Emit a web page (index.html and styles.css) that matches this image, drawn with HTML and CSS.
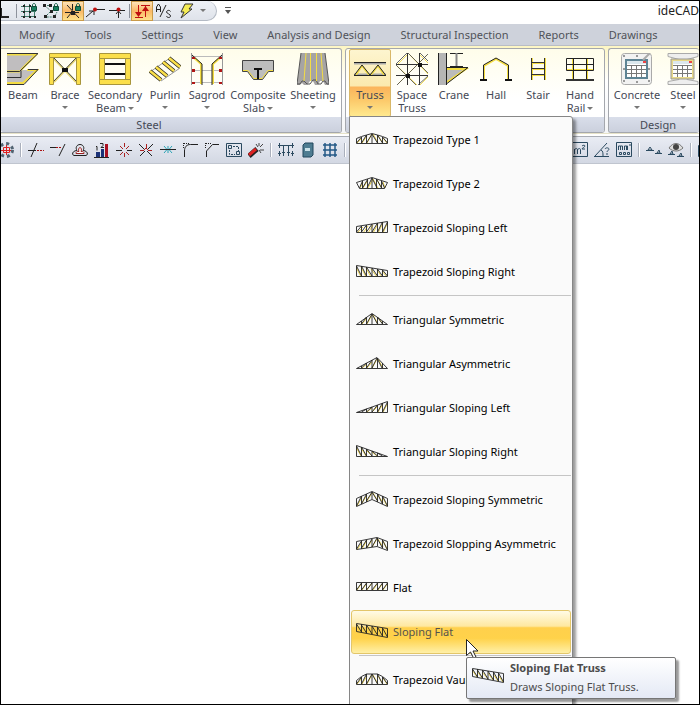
FILE: index.html
```html
<!DOCTYPE html>
<html lang="en">
<head>
<meta charset="utf-8">
<title>ideCAD</title>
<link rel="stylesheet" href="styles.css">
</head>
<body>
<div class="window">
  <header class="titlebar">
    <div class="quick">
      <button class="q q-first" aria-label="Ortho"><svg viewBox="0 0 20 20"><path class="k2" d="M9 7v9h8"/></svg></button>
      <span class="qsep"></span>
      <button class="q" aria-label="Grid snap"><svg viewBox="0 0 20 20"><path class="g" d="M5.500 3v14M10.500 3v14M15.500 11v6M2 5.500h9M2 10.500h15M2 15.500h15"/><path class="kf" d="M4 4h2v2H4zM10 4h2v2h-2zM4 10h2v2H4zM10 10h2v2h-2zM4 15h2v2H4zM10 15h2v2h-2zM15 15h2v2h-2z"/><use href="#lock"/></svg></button>
      <button class="q" aria-label="Object snap"><svg viewBox="0 0 20 20"><path class="g" d="M3 4.500h7M4 5l6 5-6 6h9M14 15l2-4" stroke-dasharray="2 1"/><path class="kf" d="M2 3h3v3H2zM8 3h3v3H8zM9 9h3v3H9zM3 14h3v3H3zM12 14h3v3h-3z"/><use href="#lock"/></svg></button>
      <button class="q on" aria-label="Node lock"><svg viewBox="0 0 20 20"><path class="k" d="M2 11.500h14M4 4l12 13M4 17l5-6M9.500 3v6"/><path class="kf" d="M8 10h4v4H8z"/><use href="#lock"/></svg></button>
      <button class="q" aria-label="Snap to line"><svg viewBox="0 0 20 20"><path class="k" d="M9 8.500h11M1 16l7-6M4 10h5v4"/><circle class="rf" cx="10" cy="8.500" r="2"/></svg></button>
      <button class="q" aria-label="Snap perpendicular"><svg viewBox="0 0 20 20"><path class="k" d="M2 9.500h16M11.500 10v7M9 13l2.500-3 2.500 3"/><circle class="rf" cx="11.500" cy="8.500" r="2"/></svg></button>
      <span class="qsep"></span>
      <button class="q on" aria-label="Elevation"><svg viewBox="0 0 20 20"><path class="r2" d="M6.500 4v11M3 16.500h8M13.500 5v11M9 4.500h9"/><path class="rf" d="M3 11h7l-3.500 5zM10 10h7l-3.500-5z"/></svg></button>
      <button class="q" aria-label="A/S"><svg viewBox="0 0 20 20"><path class="k" d="M2.500 11V6l2-3 2 3v5M3 8.500h4M6 16l6-12M16.500 10.500c-1-2-4-1-4 .5s4 2 4 4-3.500 2-4 0"/></svg></button>
      <button class="q" aria-label="Run"><svg viewBox="0 0 20 20"><path d="M9 3h8l-4 5h3L5 17l3-6H5z" fill="#f4ec55" stroke="#333"/></svg></button>
      <button class="q-arrow" aria-label="More"><svg viewBox="0 0 8 5"><path d="M1 1h6L4 4z"/></svg></button>
    </div>
    <button class="customize" aria-label="Customize"><svg viewBox="0 0 8 8"><path d="M1 0h6v1H1zM1 3h6L4 7z"/></svg></button>
    <span class="app">ideCAD</span>
  </header>

  <nav class="tabs">
    <button>Modify</button><button>Tools</button><button>Settings</button><button>View</button><button>Analysis and Design</button><button>Structural Inspection</button><button>Reports</button><button>Drawings</button>
  </nav>

  <div class="ribbon">
    <section class="group group-first">
      <div class="tools">
        <button class="tool"><svg class="ic" viewBox="0 0 32 32"><path d="M0 0h31L14 18v13H0z" fill="#c0bebf"/><path d="M14 17h17L17 31h-3z" fill="#c0bebf"/><path d="M0 1.500h29L14 17M0 18.500h13M20 17h10L16 30H0" fill="none" stroke="#f4dd43" stroke-width="2"/><path d="M0 .5h31L12.500 18.500H0M21 16.500h10L17 31.500H0M0 24.500h14v-7" fill="none" stroke="#333"/></svg><span>Beam</span></button>
        <button class="tool"><svg class="ic" viewBox="0 0 32 32"><path d="M5 6l22 23M27 6L5 29" stroke="#e6d777" stroke-width="2"/><path d="M5 5l22 23M27 5L5 28" stroke="#444"/><path class="y" d="M.5.500h31v4H.5zM.5 4.500h4v27h-4zM27.500 4.500h4v27h-4z"/><path d="M13 15h6v4h-6z" fill="#111"/></svg><span>Brace</span><i class="arr"></i></button>
        <button class="tool w58"><svg class="ic" viewBox="0 0 32 32"><path class="y" d="M.5 5.500h5v21h-5zM26.500 5.500h5v21h-5zM.5.500h31v5H.5zM.5 26.500h31v5H.5z"/><path d="M6 11h20M6 21h20" stroke="#111" stroke-width="2"/></svg><span>Secondary<br>Beam<i class="arr"></i></span></button>
        <button class="tool"><svg class="ic" viewBox="0 0 32 32"><path d="M1 19L21 5M12 28l19-13" stroke="#999"/><path d="M1 18l11 9M7 14l11 9M14 9l11 9M20 5l11 9" stroke="#222" stroke-width="4"/><path d="M1 18l11 9M7 14l11 9M14 9l11 9M20 5l11 9" stroke="#fbe04a" stroke-width="2.500"/></svg><span>Purlin</span><i class="arr"></i></button>
        <button class="tool"><svg class="ic" viewBox="0 0 32 32"><path d="M0 3.500h32M0 17.500h32M0 29.500h32" stroke="#bbb"/><path d="M.5 0v32M31.500 0v32" stroke="#999"/><path d="M2 4l8 7v20M30 4l-8 7v20" fill="none" stroke="#f4dd43" stroke-width="2"/><path d="M1 2l10 9v21M31 2l-10 9v21" fill="none" stroke="#222"/><path d="M1 4h3v2H1zM1 16h3v3H1zM1 29h3v2H1zM28 4h3v2h-3zM28 16h3v3h-3zM28 29h3v2h-3z" fill="#b01616"/></svg><span>Sagrod</span><i class="arr"></i></button>
        <button class="tool w60"><svg class="ic" viewBox="0 0 32 32"><path d="M.5 7.500h31v11h-5l-6 8h-9l-6-8h-5z" fill="#bdbdbd" stroke="#444"/><path d="M1 17.500h5l6 8h8l6-8h5" fill="none" stroke="#f4dd43"/><path d="M12 16h8M16 16v10" stroke="#111" stroke-width="2"/></svg><span>Composite<br>Slab<i class="arr"></i></span></button>
        <button class="tool w50"><svg class="ic" viewBox="0 0 32 32"><path d="M4 0h24l4 32h-4l-2-4h-3l-2 4h-3l-2-4h-3l-3 4H7l-2-2-2 2H0z" fill="#a6a4a4"/><path d="M4 0L0 31h3l2-3h2l3 3h3l3-4h3l2 4h3l2-3h2l2 3h2L28 0" fill="none" stroke="#555"/><path d="M9 0L7 28M13.500 0v28M19.500 0v28M24 0l2 28" stroke="#f4dd43"/></svg><span>Sheeting</span><i class="arr"></i></button>
      </div>
      <h2>Steel</h2>
    </section>

    <section class="group group-truss">
      <div class="tools">
        <div class="split">
          <button class="tool active" aria-expanded="true"><svg class="ic" viewBox="0 0 32 32"><path d="M0 10.500h32M0 21.500h32" stroke="#a8a8a8" stroke-width="2"/><path d="M2 22l6-9 7 9M17 22l7-9 6 9" fill="none" stroke="#f4dd43" stroke-width="1.500"/><path d="M0 9.500h32M0 22.500h32M.5 22L8 12l8 10 8-10 7.500 10" fill="none" stroke="#222"/></svg><span>Truss</span><i class="arr"></i></button>
          <div class="menu" role="menu">
            <button role="menuitem"><svg class="ic" viewBox="0 0 32 32"><path class="ty" d="M1 19l5-5M6 19l5-7M11 19l5-9M17 10l5 9M22 12l5 7M27 14l4 5"/><path class="tk" d="M.5 19.500v-5l5-2 5-1.500L16 9.500l5.500 1.500 5 1.500 5 2v5zM5.500 13v6M10.500 11v8M16 10v9M21.500 11v8M26.500 13v6M.5 19l5-6M5.500 19l5-8M10.500 19L16 10l5.500 9M21.500 11l5 8M26.500 13l5 6"/></svg>Trapezoid Type 1</button>
            <button role="menuitem"><svg class="ic" viewBox="0 0 32 32"><path class="ty" d="M4 20l3-6M7 20l5-8M12 20l5-9M17 11l5 9M21 12l5 8M27 14l2 6"/><path class="tk" d="M3.500 20.500l-3-6L16 9.500l15.500 5-3 6zM3.500 20l3-7M6.500 20l5-8.500M11 20l5-10 5 10M6.500 13v7M11.500 11v9M16 10v10M20.500 11v9M25.500 13v7M20.500 11l5 9M25.500 13l3 7"/></svg>Trapezoid Type 2</button>
            <button role="menuitem"><svg class="ic" viewBox="0 0 32 32"><path class="ty" d="M1 21l6-6M7 21l5-7M12 21l5-8M17 21l5-9M22 21l5-10M27 21l5-11"/><path class="tk" d="M.5 20.500v-6l31-5v11zM5.500 14v6M10.500 13v7M16 12v8M21.500 11v9M26.500 10v10M.5 20l5-6M5.500 20l5-7M10.500 20L16 12M16 20l5.500-9M21.500 20l5-10M26.500 20l5-10"/></svg>Trapezoid Sloping Left</button>
            <button role="menuitem"><svg class="ic" viewBox="0 0 32 32"><path class="ty" d="M0 11l5 10M5 11l5 10M10 12l5 9M15 13l6 8M21 14l5 7M26 15l5 6"/><path class="tk" d="M31.500 20.500v-6l-31-5v11zM26.500 14v6M21.500 13v7M16 12v8M10.500 11v9M5.500 10v10M31.500 20l-5-6M26.500 20l-5-7M21.500 20L16 12M16 20l-5.500-9M10.500 20l-5-10M5.500 20l-5-10"/></svg>Trapezoid Sloping Right</button>
            <hr>
            <button role="menuitem"><svg class="ic" viewBox="0 0 32 32"><path class="ty" d="M6 20l5-6M11 20l5-9M17 11l5 9M22 14l5 6"/><path class="tk" d="M.5 20.500L16 9.500l15.500 11zM5.500 17v3M10.500 13v7M16 10v10M21.500 13v7M26.500 17v3M5.500 20l5-7M10.500 20L16 10l5.500 10M21.500 13l5 7"/></svg>Triangular Symmetric</button>
            <button role="menuitem"><svg class="ic" viewBox="0 0 32 32"><path class="ty" d="M6 20l5-4M11 20l5-6M16 20l5-9M22 11l5 9"/><path class="tk" d="M.5 20.500l20.500-11 10.500 11zM5.500 18v2M10.500 15v5M16 12v8M21.500 10v10M26.500 15v5M5.500 20l5-5M10.500 20l5.500-8M16 20l5-10 5 10"/></svg>Triangular Asymmetric</button>
            <button role="menuitem"><svg class="ic" viewBox="0 0 32 32"><path class="ty" d="M11 20l5-4M16 20l6-6M22 20l5-8M27 20l5-9"/><path class="tk" d="M.5 20.500l31-11v11zM10.500 17v3M16 15v5M21.500 13v7M26.500 11v9M5.500 20l5-3M10.500 20l5.500-5M16 20l5.500-7M21.500 20l5-9M26.500 20l5-10"/></svg>Triangular Sloping Left</button>
            <button role="menuitem"><svg class="ic" viewBox="0 0 32 32"><path class="ty" d="M0 11l5 9M5 12l5 8M10 14l6 6M16 16l5 4"/><path class="tk" d="M31.500 20.500l-31-11v11zM21.500 17v3M16 15v5M10.500 13v7M5.500 11v9M26.500 20l-5-3M21.500 20L16 15M16 20l-5.500-7M10.500 20l-5-9M5.500 20l-5-10"/></svg>Triangular Sloping Right</button>
            <hr>
            <button role="menuitem"><svg class="ic" viewBox="0 0 32 32"><path class="ty" d="M1 22l5-9M6 19l5-8M11 17l5-8M17 9l5 8M22 11l5 8M27 14l4 8"/><path class="tk" d="M.5 22.500v-8L16 7.500l15.500 7v8L16 15.500zM5.500 12v8M10.500 10v8M16 8v7M21.500 10v8M26.500 12v8M.5 22l5-10M5.500 20l5-10M10.500 17L16 8l5.500 9M21.500 10l5 10M26.500 12l5 10"/></svg>Trapezoid Sloping Symmetric</button>
            <button role="menuitem"><svg class="ic" viewBox="0 0 32 32"><path class="ty" d="M1 22l5-8M6 21l5-9M11 20l5-8M16 19l5-8M22 11l5 8M27 13l4 8"/><path class="tk" d="M.5 21.500v-8l20.500-4 10.500 4v9L21 18.500zM5.500 13v8M10.500 12v8M16 11v8M21.500 10v8M26.500 12v8M.5 21l5-8M5.500 20l5-8M10.500 20l5.500-9M16 19l5-9 5.500 10M26.500 12l5 10"/></svg>Trapezoid Slopping Asymmetric</button>
            <button role="menuitem"><svg class="ic" viewBox="0 0 32 32"><path class="ty" d="M1 18l5-7M6 18l5-7M11 18l5-7M17 18l5-7M22 18l5-7M27 18l5-7"/><path class="tk" d="M.5 10.500h31v8H.5zM5.500 11v7M10.500 11v7M16 11v7M21.500 11v7M26.500 11v7M.5 18l5-7M5.500 18l5-7M10.500 18l5.500-7M16 18l5.500-7M21.500 18l5-7M26.500 18l5-7"/></svg>Flat</button>
            <button role="menuitem" class="hover"><svg class="ic" viewBox="0 0 32 32"><use href="#sloping-flat"/></svg>Sloping Flat</button>
            <hr>
            <button role="menuitem"><svg class="ic" viewBox="0 0 32 32"><path class="ty" d="M1 20l5-6M6 20l5-8M11 20l5-9M17 11l5 9M22 12l5 8M27 14l4 6"/><path class="tk" d="M.5 20.500v-4l5-4 5-2.500h11l5 2.500 5 4v4zM5.500 13v7M10.500 10v10M16 10v10M21.500 10v10M26.500 13v7M.5 20l5-7M5.500 20l5-10M10.500 20L16 10l5.500 10M21.500 10l5 10M26.500 13l5 7"/></svg>Trapezoid Vault</button>
            <div class="tip" role="tooltip">
              <svg class="ic" viewBox="0 0 32 32"><use href="#sloping-flat"/></svg>
              <div><strong>Sloping Flat Truss</strong><p>Draws Sloping Flat Truss.</p></div>
            </div>
            <svg class="cursor" viewBox="0 0 13 20"><path d="M.5.500v16l4-3.500 3 6 2.500-1-3-6h5z" fill="#fff" stroke="#222"/></svg>
          </div>
        </div>
        <button class="tool"><svg class="ic" viewBox="0 0 32 32"><path d="M1 12L12 1M1 13l20 19M13 1l19 20M2 31L31 2M24 32l8-8M24 2l8 8" stroke="#f0dc5c"/><path d="M0 11.500h32M0 22.500h32M11.500 0v32M23.500 0v32" stroke="#333"/><path d="M0 11L11 0M0 12l20 20M12 0l20 20M1 32L32 1M22 32l10-9M24 0l8 8" stroke="#444" stroke-width=".8"/><path d="M10 21h4v4h-4zM22 10h4v4h-4z" fill="#111"/></svg><span>Space<br>Truss</span></button>
        <button class="tool"><svg class="ic" viewBox="0 0 32 32"><path d="M9 15h19L9 29z" fill="#bbb"/><path d="M9 16h19L9 29" fill="none" stroke="#f4dd43" stroke-width="2"/><path d="M0 0h8v32H0z" fill="#b5b5b5"/><path d="M.5 0v32M8.500 0v32M9 14.500h21L9 30.500M12 .5h13M12 13.500h13" fill="none" stroke="#222"/><path d="M18.500 0v13" stroke="#888" stroke-width="2"/></svg><span>Crane</span></button>
        <button class="tool"><svg class="ic" viewBox="0 0 32 32"><path d="M4 26V13l12-7 12 7v13" fill="none" stroke="#f4dd43" stroke-width="2"/><path d="M3.500 27V12L16 5l12.500 7v15" fill="none" stroke="#222"/><path d="M0 27h7M25 27h7" stroke="#111" stroke-width="2"/></svg><span>Hall</span></button>
        <button class="tool"><svg class="ic" viewBox="0 0 32 32"><path d="M10 5v22M23 5v22M10 10h12M10 16h12M10 22h12" stroke="#f4dd43" stroke-width="2"/><path d="M9.500 5v22M22.500 5v22M10 9.500h12M10 15.500h12M10 21.500h12" stroke="#333"/></svg><span>Stair</span></button>
        <button class="tool"><svg class="ic" viewBox="0 0 32 32"><path d="M9 6v20M23 6v20M3 17h26" stroke="#f4dd43" stroke-width="2"/><path d="M2.500 5.500h27v12h-27zM2 11.500h28M9.500 6v20M22.500 6v20" fill="none" stroke="#222"/><path d="M2 27h28" stroke="#333" stroke-width="2"/></svg><span>Hand<br>Rail<i class="arr"></i></span></button>
      </div>
      <h2>&nbsp;</h2>
    </section>

    <section class="group group-last">
      <div class="tools">
        <button class="tool w50"><svg class="ic" viewBox="0 0 32 32"><rect x=".5" y=".5" width="30" height="31" rx="3" fill="#f2f2f2" stroke="#aaa"/><path d="M2 3h2M2 16h2M2 28h2M27 28h2M27 16h2M15 3h2M15 29h2" stroke="#999" stroke-width="2"/><path d="M4 6h23v20H4z" fill="#5d8394"/><use href="#sheet"/><path d="M22 7l7-7" stroke="#aaa" stroke-width="2"/></svg><span>Concrete</span><i class="arr"></i></button>
        <button class="tool"><svg class="ic" viewBox="0 0 32 32"><path d="M1 .5h30v3l-11 3v20l11 2v3H1v-3l11-2v-20l-11-3z" fill="#eee" stroke="#aaa"/><path d="M4 6h23v20H4z" fill="#e8d989" stroke="#999"/><use href="#sheet"/></svg><span>Steel</span><i class="arr"></i></button>
      </div>
      <h2>Design</h2>
    </section>
  </div>

  <div class="toolbar">
    <button class="t t-first" aria-label="Move"><svg viewBox="0 0 16 16"><circle cx="8" cy="8" r="6.500" fill="none" stroke="#526472" stroke-width="3" stroke-dasharray="3 3"/><path d="M3 8.500h10M8.500 3v10" stroke="#d22"/><path d="M5.500 5.500h6v5h-6z" fill="none" stroke="#d22"/></svg></button>
    <span class="tsep"></span>
    <button class="t" aria-label="Trim"><svg viewBox="0 0 16 16"><path class="k" d="M0 8.500h8M3 15L9 1"/><path d="M9 8.500h7" stroke="#a11" stroke-dasharray="2 1"/></svg></button>
    <button class="t" aria-label="Extend"><svg viewBox="0 0 16 16"><path class="k" d="M0 5.500h6M9 14l6-12"/><path d="M6 5.500h6" stroke="#a11" stroke-dasharray="2 1"/></svg></button>
    <button class="t" aria-label="Offset"><svg viewBox="0 0 16 16"><path d="M2 13.500h12c3-1 1-5-3-5 2-3 0-6-3-6s-5 3-3 6c-4 0-6 4-3 5z" fill="none" stroke="#222"/><path d="M4 11.500h8c0-2-1-2-3-2 1-2 0-4-1-4s-2 2-1 4c-2 0-3 0-3 2z" fill="#fff" stroke="#922"/></svg></button>
    <button class="t" aria-label="Compare"><svg viewBox="0 0 16 16"><path d="M2 10h4v5H2zM7 7h3v8H7z" fill="#1b3278"/><path d="M11 2h3v13h-3z" fill="#a12"/><path d="M0 15.500h15M2 4.500h1v4M6 1.500h3v2l-2 2h3" class="k"/></svg></button>
    <button class="t" aria-label="Break"><svg viewBox="0 0 16 16"><path class="k" d="M0 8.500h6M11 8.500h5"/><path d="M8.500 1v4M8.500 11v4M4 4l3 3M13 4l-3 3M4 13l3-3M13 13l-3-3" stroke="#a22"/></svg></button>
    <button class="t" aria-label="Explode"><svg viewBox="0 0 16 16"><path class="k" d="M1 2l5 5M15 2l-5 5M2 14l5-5M14 14L9 9"/><path d="M8.500 2v4M2 8.500h4M10 8.500h4M8 6l3 3M8 6L5 9" stroke="#a22"/></svg></button>
    <button class="t" aria-label="Join"><svg viewBox="0 0 16 16"><path d="M4 4l3 3.500L4 11M12 4L9 7.500l3 3.500M8 4v7" fill="none" stroke="#2aa3b5"/><path class="k" d="M0 7.500h16"/></svg></button>
    <button class="t" aria-label="Fillet"><svg viewBox="0 0 16 16"><path class="k" d="M2.500 15V9c0-4 2-6.500 6-6.500H16"/><path class="k" d="M2 1.500h6M1.500 1v6" stroke-dasharray="1 1"/></svg></button>
    <button class="t" aria-label="Chamfer"><svg viewBox="0 0 16 16"><path class="k" d="M2.500 15V9l6-6.500H15"/><path class="k" d="M2 1.500h6M1.500 1v6" stroke-dasharray="1 1"/></svg></button>
    <button class="t" aria-label="Scale"><svg viewBox="0 0 16 16"><path class="n" d="M.5 1.500h15v13H.5zM2.500 3.500h3v3h-3zM10.500 9.500h3v3h-3z"/><path class="n" d="M7 4.500h5.500V9M3.500 8v4.500H9" stroke-dasharray="2 1"/></svg></button>
    <button class="t" aria-label="Magic"><svg viewBox="0 0 16 16"><path d="M1 14l8-7" stroke="#222" stroke-width="5"/><path d="M1 13l7-6" stroke="#d22" stroke-width="3"/><path d="M11 1v3M15 2l-3 3M12 8h4M8 2l2 3M13 11l-2-3" stroke="#444"/></svg></button>
    <span class="tsep"></span>
    <button class="t" aria-label="Dimension"><svg viewBox="0 0 16 16"><path class="n" d="M1.500 1v5M14.500 1v5M0 3.500h16M5.500 3v6M10.500 3v6M1.500 9v5M0 11.500h3M4 10.500h3M5.500 9v5M9 10.500h3M10.500 9v5M13 11.500h3M14.500 9v5"/></svg></button>
    <button class="t" aria-label="Library"><svg viewBox="0 0 16 16"><path d="M3 3l2-2h8v12l-2 2H3z" fill="#4e7c91" stroke="#21475d"/><path d="M5 6h5v3H5z" fill="#c9e1e8"/></svg></button>
    <button class="t" aria-label="Grid"><svg viewBox="0 0 16 16"><path d="M3 1v14M8 1v14M13 1v14M1 3h14M1 8h14M1 13h14" stroke="#245a86" stroke-width="1.500"/></svg></button>
    <span class="tsep"></span>
    <div class="covered"></div>
    <button class="t" aria-label="Area"><svg viewBox="0 0 16 16"><path class="n" d="M.5.500h15v14H.5zM2.500 12V7M2.500 8c1-2 3-2 3 0v4M5.500 8c1-2 3-2 3 0v4M10 4c1-1 3-1 3 0s-3 2-3 3h3"/></svg></button>
    <button class="t" aria-label="Angle"><svg viewBox="0 0 16 16"><path class="n" d="M0 14.500h15M1 14L13 1M7 8c2 1 2 3 2 6M11 7c1-2 4-1 4 0s-2 2-2 3M13 11v2"/></svg></button>
    <button class="t" aria-label="Quantity"><svg viewBox="0 0 16 16"><path class="n" d="M.5.500h15v14H.5zM2.500 8V4h2v4M4.500 4h2v4M8.500 8V4h2v4M10.500 4h1v4M13 3h2M3.500 10.500h2v2h-2zM7.500 10.500h2v2h-2zM11.500 10.500h2v2h-2z"/></svg></button>
    <span class="tsep"></span>
    <button class="t" aria-label="Level"><svg viewBox="0 0 16 16"><path class="n" d="M0 8.500h8M9 11.500h7M2 8l2-3 2 3zM11 11l2-3 1 3z"/></svg></button>
    <button class="t" aria-label="Show level"><svg viewBox="0 0 16 16"><path d="M1 6c4-6 10-6 14 0-4 4-10 4-14 0z" fill="#ddd" stroke="#777"/><circle cx="8" cy="5" r="3" fill="#444"/><path class="n" d="M0 12.500h7M9 14.500h7M2 12l2-3 1 3zM11 14l2-3 1 3z"/></svg></button>
    <span class="tsep"></span>
    <button class="t" aria-label="More"><svg viewBox="0 0 16 16"><path class="n" d="M.5 14.500v-11h15v11zM3 3V1h5"/></svg></button>
  </div>
  <main class="canvas"></main>
</div>

<svg class="defs" aria-hidden="true">
  <symbol id="lock" viewBox="0 0 20 20"><path d="M13.500 6V4c0-2 3-2 3 0v2" fill="none" stroke="#17624a"/><path d="M12.500 5.500h5v4h-5z" fill="#178060" stroke="#0d4b39"/></symbol>
  <symbol id="sheet" viewBox="0 0 32 32"><path d="M6 8h19v16H6z" fill="#fff"/><path d="M6 8h19v3H6z" fill="#dce8ee"/><path d="M6 12.500h19M6 16.500h19M6 20.500h19M10.500 12v12M15.500 12v12M20.500 12v12" stroke="#777"/><path d="M22 8h3v2h-3z" fill="#e44"/></symbol>
  <symbol id="sloping-flat" viewBox="0 0 32 32"><path class="ty" d="M0 9l5 7M5 10l5 7M10 11l6 7M16 12l5 7M21 13l5 7M26 14l5 7"/><path class="tk" d="M.5 7.500l31 5v9l-31-6zM5.500 8v8M10.500 9v8M16 10v8M21.500 11v8M26.500 12v8M.5 8l5 8M5.500 9l5 8M10.500 9l5.500 9M16 10l5.500 9M21.500 11l5 9M26.500 12l5 9"/></symbol>
</svg>
</body>
</html>
```

FILE: styles.css
```css
* { box-sizing: border-box; }

body {
  margin: 0;
  font: 11px/13px "Noto Sans", "Open Sans", sans-serif;
  color: #454955;
}

button {
  margin: 0;
  padding: 0;
  border: 0;
  background: none;
  font: inherit;
  color: inherit;
}

svg { display: block; }

.defs { position: absolute; width: 0; height: 0; }

.window {
  display: flex;
  flex-direction: column;
  height: 100vh;
  border: 1px solid #000;
  overflow: hidden;
  background: #fff;
}

/* Shared strokes and fills */
.k, .g, .n, .k2, .r2 { fill: none; stroke: #222; }
.g { stroke: #3f7a68; }
.n { stroke: #2b4a60; }
.k2 { stroke-width: 2; }
.r2 { stroke: #c01010; }
.kf { fill: #222; }
.rf { fill: #c01010; }
.y { fill: #fbdf4b; stroke: #a8953c; }
.ty { fill: none; stroke: #ecd24a; }
.tk { fill: none; stroke: #222; stroke-width: 0.9; }

/* Title bar */
.titlebar {
  display: flex;
  flex: none;
  align-items: flex-start;
  height: 23px;
}

.quick {
  display: flex;
  align-items: center;
  height: 20px;
  padding-right: 7px;
  border: 1px solid #b4bac4;
  border-width: 0 1px 1px 0;
  border-radius: 0 10px 10px 0;
  background: linear-gradient(#eef1f6, #dfe3ea);
}

.q { width: 22px; height: 20px; }
.q svg { width: 20px; height: 20px; margin: 0 auto; }
.q-first { width: 14px; overflow: hidden; }
.q-first svg { margin-left: -9px; }
.q.on {
  border: 1px solid #c99a4a;
  background: linear-gradient(#fde3b8, #fbb866 50%, #fde08a);
}
.q.on svg { margin: -1px 0 0; }
.qsep { width: 1px; height: 14px; margin: 0 1px; background: #8d929c; }

.q-arrow svg { width: 8px; height: 5px; margin: 0 2px; fill: #777; }
.customize svg { width: 8px; height: 8px; margin: 6px 7px; fill: #555; }

.app {
  margin-left: auto;
  padding-top: 3px;
  font-size: 12px;
  line-height: 14px;
  color: #222;
}

/* Ribbon tabs */
.tabs {
  display: flex;
  flex: none;
  gap: 30px;
  height: 22px;
  padding-left: 18px;
  border-bottom: 1px solid #b9bdc6;
  background: #ced2db;
  color: #505359;
  white-space: nowrap;
}

/* Ribbon */
.ribbon {
  display: flex;
  flex: none;
  gap: 3px;
  height: 88px;
  padding-top: 2px;
  border-bottom: 1px solid #e6e2c8;
  background: linear-gradient(#fdf6c3, #fff 40%, #f4f5f7);
}

.group {
  display: flex;
  flex-direction: column;
  flex: none;
  height: 85px;
  border: 1px solid #a4a7ad;
  border-radius: 3px;
  background: linear-gradient(#fffdea, #fff 60%);
}
.group h2 {
  height: 15px;
  margin: 0;
  font-size: 11px;
  font-weight: normal;
  line-height: 15px;
  text-align: center;
  background: linear-gradient(#d9deea, #cbd0dd);
  border-radius: 0 0 2px 2px;
}
.group-first { border-left: 0; border-radius: 0 3px 3px 0; }
.group-first h2 { padding-right: 44px; }
.group-last { flex: 1; border-right: 0; min-width: 0; }
.group-last h2 { padding-left: 8px; }

.tools { display: flex; flex: 1; padding: 0 3px; }
.group-first .tools { padding-left: 1px; }

.tool {
  display: flex;
  flex: none;
  flex-direction: column;
  align-items: center;
  width: 42px;
  height: 68px;
  padding-top: 4px;
  white-space: nowrap;
}
.tool span { margin-top: 3px; }
.w50 { width: 50px; }
.w58 { width: 58px; }
.w60 { width: 60px; }

.ic { flex: none; width: 32px; height: 32px; }

.arr {
  display: inline-block;
  border: 3px solid transparent;
  border-top-color: #777;
  border-bottom: 0;
}
.tool > .arr { margin-top: 5px; }
span .arr { margin-left: 2px; vertical-align: 2px; }

.split { position: relative; }
.active {
  padding-top: 3px;
  border: 1px solid #d8b768;
  border-radius: 2px;
  background: linear-gradient(#fdf5cf, #fbe9ae 36px, #fbb45c 37px, #fcc96a 50px, #ffe98e);
}

/* Truss menu */
.menu {
  position: absolute;
  z-index: 2;
  top: 67px;
  left: 0;
  width: 224px;
  height: 640px;
  padding: 1px;
  border: 1px solid #868686;
  border-radius: 0 3px 0 0;
  background: #fafafa;
  box-shadow: 3px 3px 3px #0006;
  color: #000;
}
.menu button {
  display: flex;
  align-items: center;
  gap: 5px;
  width: 100%;
  height: 44px;
  padding-left: 4px;
  border: 1px solid transparent;
  line-height: 14px;
  white-space: nowrap;
}
.menu hr {
  height: 1px;
  margin: 1px 0 2px 8px;
  border: 0;
  background: #c5c5c5;
}
.menu .hover {
  border-color: #e3c66a;
  border-radius: 3px;
  background: linear-gradient(#fffbe6, #fee8a0 36%, #ffd04c 40%, #ffd24a 65%, #fff0a8);
  color: #55534c;
}

.tip {
  position: absolute;
  z-index: 1;
  top: 540px;
  left: 116px;
  display: flex;
  gap: 6px;
  width: 210px;
  height: 42px;
  padding: 3px 5px;
  border: 1px solid #767676;
  border-radius: 2px;
  background: linear-gradient(#fff, #e4e9f5);
  box-shadow: 3px 3px 2px #0006;
  color: #4c4c4c;
  white-space: nowrap;
}
.tip p { margin: 6px 0 0; }

.cursor {
  position: absolute;
  z-index: 0;
  top: 522px;
  left: 116px;
  width: 13px;
  height: 20px;
}

/* Drawing toolbar */
.toolbar {
  display: flex;
  flex: none;
  align-items: center;
  height: 28px;
  margin-top: 2px;
  border-top: 1px solid #a9adb5;
  border-bottom: 1px solid #c0c5cf;
  background: linear-gradient(#e9ecf4, #d3d8e3);
}
.t { flex: none; width: 22px; height: 16px; }
.t svg { width: 16px; height: 16px; margin: 0 3px; }
.t-first { width: 16px; }
.t-first svg { margin-left: -3px; }
.tsep {
  flex: none;
  width: 2px;
  height: 14px;
  margin: 0 3px;
  border-left: 1px solid #aab0bc;
  background: #fff;
}
.covered { flex: none; width: 220px; }

.canvas { flex: 1; }
```
